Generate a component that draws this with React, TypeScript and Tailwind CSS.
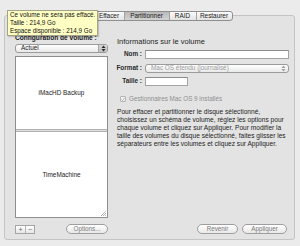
import React from 'react';

// first tab sits under the tooltip, its label is not visible
const TABS = [
  { label: '', w: 'w-[26px]' },
  { label: 'Effacer', w: 'w-[30px]' },
  { label: 'Partitionner', w: 'w-[45px]' },
  { label: 'RAID', w: 'w-[27px]' },
  { label: 'Restaurer', w: 'w-[36px]' }
];

const HELP = [
  'Pour effacer et partitionner le disque sélectionné,',
  'choisissez un schéma de volume, réglez les options pour',
  'chaque volume et cliquez sur Appliquer. Pour modifier la',
  'taille des volumes du disque sélectionné, faites glisser les',
  'séparateurs entre les volumes et cliquez sur Appliquer.'
];

function Arrows({ color = '#333' }: { color?: string }) {
  return (
    <svg width="5" height="7" viewBox="0 0 5 7">
      <path d="M0.5 3 L2.5 0.6 L4.5 3 Z" fill={color} />
      <path d="M0.5 4 L2.5 6.4 L4.5 4 Z" fill={color} />
    </svg>
  );
}

function Popup({ label, disabled = false }: { label: string; disabled?: boolean }) {
  return (
    <div className="flex h-[9px] items-center rounded-[3px] border border-[#9b9b9b] bg-gradient-to-b from-white to-[#e9e9e9]">
      <span
        className={`flex-1 truncate pl-[5px] text-[6.4px] leading-none ${
          disabled ? 'text-[#9c9c9c]' : 'text-[#1a1a1a]'
        }`}
      >
        {label}
      </span>
      <span
        className={`flex h-full w-[9px] items-center justify-center rounded-r-[2px] ${
          disabled ? '' : 'border-l border-[#a8a8a8] bg-gradient-to-b from-[#d9d9d9] to-[#bfbfbf]'
        }`}
      >
        <Arrows color={disabled ? '#a0a0a0' : '#2a2a2a'} />
      </span>
    </div>
  );
}

function Pill({ label, className = '' }: { label: string; className?: string }) {
  return (
    <div
      className={`flex h-[10px] items-center justify-center whitespace-nowrap rounded-full border border-[#9e9e9e] bg-gradient-to-b from-white to-[#e8e8e8] text-[6.3px] leading-none text-[#7a7a7a] ${className}`}
    >
      {label}
    </div>
  );
}

function Field({ className = '' }: { className?: string }) {
  return <div className={`h-[9px] border border-[#a3a3a3] border-t-[#8c8c8c] bg-white ${className}`} />;
}

function Label({ text }: { text: string }) {
  return (
    <span className="flex w-[25px] shrink-0 justify-end whitespace-nowrap text-[6.4px] font-bold leading-none text-[#2a2a2a]">
      {text}
    </span>
  );
}

export default function App() {
  return (
    <div className="relative h-[246px] w-[300px] overflow-hidden bg-[#ebebeb] pl-[4px] pr-[5px] pt-[11px] font-['Liberation_Sans',Arial,sans-serif] text-[#1a1a1a]">
      {/* tabs */}
      <div className="relative z-10 flex justify-center">
        <div className="flex h-[10px] overflow-hidden rounded-[3px] border border-[#8f8f8f] bg-gradient-to-b from-[#fbfbfb] to-[#e3e3e3]">
          {TABS.map((t, i) => (
            <div
              key={i}
              className={`flex items-center justify-center whitespace-nowrap text-[6.4px] leading-none ${t.w} ${
                i > 0 ? 'border-l border-[#a3a3a3]' : ''
              } ${t.label === 'Partitionner' ? 'bg-gradient-to-b from-[#b9b9b9] to-[#d2d2d2]' : ''}`}
            >
              {t.label}
            </div>
          ))}
        </div>
      </div>

      {/* group box */}
      <div className="-mt-[6px] flex h-[225px] gap-[9px] rounded-[3px] border border-[#c4c4c4] bg-[#e3e3e3] pl-[10px] pr-[5px]">
        {/* left column */}
        <div className="flex w-[93px] shrink-0 flex-col pt-[17px]">
          <div className="h-[10px] whitespace-nowrap text-[6.6px] font-bold leading-[10px]">Configuration de volume :</div>
          <div className="mt-[1px]">
            <Popup label="Actuel" />
          </div>
          <div className="relative mt-[3px] flex h-[162px] flex-col border border-[#8e8e8e] bg-white">
            <div className="flex h-[72px] items-center justify-center text-[6.4px]">iMacHD Backup</div>
            <div className="h-[3px] border-y border-[#b3b3b3] bg-[#dcdcdc]" />
            <div className="flex flex-1 items-center justify-center text-[6.4px]">TimeMachine</div>
            <svg className="absolute bottom-[1px] right-[1px]" width="6" height="6" viewBox="0 0 6 6">
              <path d="M1 6 L6 1 M3 6 L6 3 M5 6 L6 5" stroke="#9a9a9a" strokeWidth="0.7" />
            </svg>
          </div>
          <div className="mt-[6px] flex items-center justify-between">
            <div className="flex h-[9px] border border-[#a5a5a5] bg-gradient-to-b from-white to-[#e6e6e6]">
              <div className="flex w-[9px] items-center justify-center text-[7px] leading-none text-[#666]">+</div>
              <div className="flex w-[9px] items-center justify-center border-l border-[#b5b5b5] text-[7px] leading-none text-[#666]">−</div>
            </div>
            <Pill label="Options..." className="w-[42px]" />
          </div>
        </div>

        {/* right column */}
        <div className="flex min-w-0 flex-1 flex-col pt-[21px]">
          <div className="h-[10px] whitespace-nowrap text-[7.5px] leading-[10px] text-[#262626]">Informations sur le volume</div>
          <div className="mt-[3px] flex items-center">
            <Label text="Nom :" />
            <Field className="ml-[3px] flex-1" />
          </div>
          <div className="mt-[5px] flex items-center">
            <Label text="Format :" />
            <div className="ml-[3px] flex-1">
              <Popup label="Mac OS étendu (journalisé)" disabled />
            </div>
          </div>
          <div className="mt-[4px] flex items-center">
            <Label text="Taille :" />
            <Field className="ml-[3px] w-[43px]" />
          </div>
          <div className="mt-[10px] flex items-center gap-[3px] pl-[3px]">
            <div className="flex h-[6px] w-[6px] items-center justify-center rounded-[1px] border border-[#b4b4b4] bg-[#f4f4f4]">
              <svg width="5" height="5" viewBox="0 0 5 5">
                <path d="M0.6 2.6 L2 4 L4.5 0.5" fill="none" stroke="#9a9a9a" strokeWidth="0.9" />
              </svg>
            </div>
            <span className="whitespace-nowrap text-[6.3px] leading-none text-[#8e8e8e]">Gestionnaires Mac OS 9 installés</span>
          </div>
          <div className="mt-[6px] text-[6.6px] leading-[8px] text-[#1e1e1e]">
            {HELP.map((l) => (
              <div key={l} className="whitespace-nowrap">
                {l}
              </div>
            ))}
          </div>
          <div className="mb-[5px] mt-auto flex justify-end gap-[4px] pr-[2px]">
            <Pill label="Revenir" className="w-[41px]" />
            <Pill label="Appliquer" className="w-[45px]" />
          </div>
        </div>
      </div>

      {/* tooltip */}
      <div className="absolute left-[7px] top-[10px] z-20 whitespace-nowrap border border-[#a3a38a] bg-[#ffffc4] px-[2px] text-[6.3px] leading-[8px] text-[#111] shadow-[1px_1px_1px_rgba(0,0,0,0.15)]">
        <div>Ce volume ne sera pas effacé.</div>
        <div>Taille : 214,9 Go</div>
        <div>Espace disponible : 214,9 Go</div>
      </div>
    </div>
  );
}
